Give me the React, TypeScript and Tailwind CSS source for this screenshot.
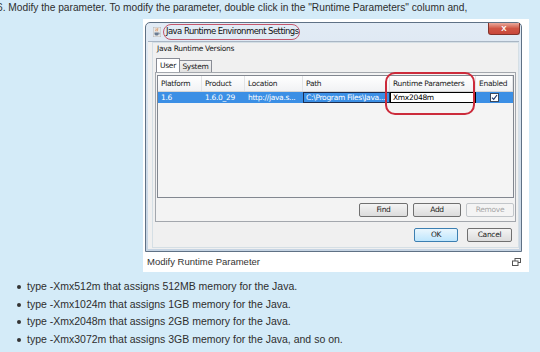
import React from 'react';

const columns = [
    { label: 'Platform', w: 'w-[44px]' },
    { label: 'Product', w: 'w-[43px]' },
    { label: 'Location', w: 'w-[58px]' },
    { label: 'Path', w: 'w-[87px]' },
    { label: 'Runtime Parameters', w: 'w-[86px]' },
    { label: 'Enabled', w: 'w-[37px]' },
];

const bullets = [
    'type -Xmx512m that assigns 512MB memory for the Java.',
    'type -Xmx1024m that assigns 1GB memory for the Java.',
    'type -Xmx2048m that assigns 2GB memory for the Java.',
    'type -Xmx3072m that assigns 3GB memory for the Java, and so on.',
];

const JavaIcon = () => (
    <svg width="8" height="10" viewBox="0 0 8 10">
        <rect x="0" y="0" width="8" height="10" fill="#e8e8e8" stroke="#9a9a9a" strokeWidth="0.6" />
        <path d="M3 1.5c1 1-1 1.5 0 2.8M4.6 1.2c1 1.1-1 1.7 0 3" stroke="#d8742c" strokeWidth="0.7" fill="none" />
        <path d="M1.5 5.5h4.2v1.6c0 .9-.8 1.5-2.1 1.5s-2.1-.6-2.1-1.5z" fill="#6b7c93" />
        <path d="M5.7 6h.7c.6 0 .6 1-.1 1.1h-.6" stroke="#6b7c93" strokeWidth="0.5" fill="none" />
    </svg>
);

const WinButton = ({ label, w, kind }: { label: string; w: string; kind?: 'default' | 'disabled' }) => {
    const look =
        kind === 'default'
            ? 'border-[#3c7fb1] bg-gradient-to-b from-[#eaf6fd] to-[#bee6fd] text-[#1a1a1a]'
            : kind === 'disabled'
              ? 'border-[#c2c6ca] bg-[#f4f4f4] text-[#a8a8a8]'
              : 'border-[#707070] bg-gradient-to-b from-[#f4f4f4] to-[#dcdcdc] text-[#1a1a1a]';
    return (
        <div className={`${w} h-[14px] rounded-[2px] border flex items-center justify-center text-[7.5px] ${look}`}>
            {label}
        </div>
    );
};

export default function App() {
    return (
        <div className="w-[540px] h-[352px] overflow-hidden bg-[#d4ebf8] text-[#2e2e2e] font-['Liberation_Sans',Arial,sans-serif]">
            {/* Step text */}
            <p className="-ml-[3px] text-[10.2px] leading-[16px] whitespace-nowrap">
                6. Modify the parameter. To modify the parameter, double click in the "Runtime Parameters" column and,
            </p>

            {/* Figure card */}
            <div className="relative mt-[3px] ml-[143px] w-[386px] h-[253px] bg-white pt-[3px] pl-[2px]">
                {/* Window */}
                <div className="w-[377px] h-[230px] flex flex-col border border-[#5f7185] rounded-t-[5px] bg-gradient-to-b from-[#e2ebf5] to-[#c6d4e3]">
                    {/* Title bar */}
                    <div className="h-[18px] flex items-start justify-between pl-[7px] pr-[1px]">
                        <div className="flex items-center gap-[5px] h-[17px]">
                            <JavaIcon />
                            <span className="text-[8.5px] text-[#111] font-['DejaVu_Sans',sans-serif] tracking-[-0.55px]">
                                Java Runtime Environment Settings
                            </span>
                        </div>
                        <div className="w-[32px] h-[12px] rounded-b-[3px] border border-t-0 border-[#83322a] bg-gradient-to-b from-[#e9a99c] via-[#cf5544] to-[#c9473a] flex items-center justify-center text-white text-[8px] font-bold leading-none">
                            X
                        </div>
                    </div>

                    {/* Client area */}
                    <div className="mx-[2px] h-[208px] bg-[#f0f0f0] border-t border-[#a9b6c4]">
                        <div className="ml-[4px] w-[367px] h-[206px] border border-[#d5dfe5] font-['DejaVu_Sans',sans-serif] tracking-[-0.3px] text-[#1a1a1a]">
                            <div className="pl-[4px] h-[11px] leading-[11px] text-[7.5px]">Java Runtime Versions</div>

                            {/* Tabs */}
                            <div className="mt-[4px] ml-[3px] h-[14px] flex items-end text-[7.5px]">
                                <div className="w-[24px] h-[14px] bg-white border border-b-0 border-[#898c95] flex items-center justify-center">
                                    User
                                </div>
                                <div className="w-[32px] h-[12px] bg-gradient-to-b from-[#f2f2f2] to-[#e1e1e1] border border-l-0 border-b-0 border-[#898c95] flex items-center justify-center">
                                    System
                                </div>
                            </div>

                            {/* Tab pane */}
                            <div className="ml-[2px] w-[361px] h-[150px] border border-[#a3a7ad] bg-[#f3f3f3]">
                                {/* Table */}
                                <div className="ml-[1px] mt-[2px] w-[357px] h-[123px] border border-[#828790] bg-[#f4f4f4] text-[7.5px]">
                                    <div className="h-[16px] flex bg-gradient-to-b from-white to-[#f1f2f4] border-b border-[#d5d5d5]">
                                        {columns.map(c => (
                                            <div key={c.label} className={`${c.w} pl-[3px] flex items-center border-r border-[#e3e4e6] whitespace-nowrap`}>
                                                {c.label}
                                            </div>
                                        ))}
                                    </div>
                                    <div className="h-[11px] flex bg-[#3b8fe5] text-white">
                                        <div className="w-[44px] pl-[3px] leading-[11px]">1.6</div>
                                        <div className="w-[43px] pl-[3px] leading-[11px]">1.6.0_29</div>
                                        <div className="w-[58px] pl-[3px] leading-[11px] whitespace-nowrap overflow-hidden">http://java.s...</div>
                                        <div className="w-[87px] pl-[2px] leading-[9px] border border-[#1c2f52] whitespace-nowrap overflow-hidden">
                                            C:\Program Files\Java...
                                        </div>
                                        <div className="w-[86px] pl-[2px] leading-[9px] bg-white text-black border border-black">Xmx2048m</div>
                                        <div className="w-[37px] flex items-center justify-center">
                                            <div className="w-[9px] h-[9px] bg-white border border-[#3a4a60] flex items-center justify-center">
                                                <svg width="7" height="7" viewBox="0 0 7 7">
                                                    <path d="M1 3.6l1.7 1.8L6 1" stroke="#1f3a6e" strokeWidth="1.2" fill="none" />
                                                </svg>
                                            </div>
                                        </div>
                                    </div>
                                </div>

                                <div className="mt-[5px] pr-[1px] flex justify-end gap-[5px]">
                                    <WinButton label="Find" w="w-[49px]" />
                                    <WinButton label="Add" w="w-[48px]" />
                                    <WinButton label="Remove" w="w-[48px]" kind="disabled" />
                                </div>
                            </div>

                            <div className="mt-[6px] pr-[6px] flex justify-end gap-[9px]">
                                <WinButton label="OK" w="w-[44px]" kind="default" />
                                <WinButton label="Cancel" w="w-[45px]" />
                            </div>
                        </div>
                    </div>
                </div>

                {/* Caption */}
                <div className="w-[377px] h-[20px] flex items-center justify-between pl-[2px] pr-[1px]">
                    <span className="text-[9.5px] text-[#333]">Modify Runtime Parameter</span>
                    <svg width="9" height="8" viewBox="0 0 9 8">
                        <rect x="3" y="0.5" width="5.5" height="4" fill="none" stroke="#555" />
                        <rect x="0.5" y="3" width="5.5" height="4.5" fill="white" stroke="#555" />
                    </svg>
                </div>

                {/* Red annotation marks */}
                <div className="absolute left-[20px] top-[5px] w-[137px] h-[16px] rounded-full border border-[#c4566c]" />
                <div className="absolute left-[242px] top-[53px] w-[90px] h-[43px] rounded-[10px] border-2 border-[#cc2b3b]" />
            </div>

            {/* Bullet list */}
            <ul className="mt-[6px] text-[10.5px] leading-[17.7px]">
                {bullets.map(b => (
                    <li key={b} className="flex items-center whitespace-nowrap">
                        <span className="ml-[17px] mr-[6px] w-[4px] h-[4px] rounded-full bg-[#333]" />
                        {b}
                    </li>
                ))}
            </ul>
        </div>
    );
}
